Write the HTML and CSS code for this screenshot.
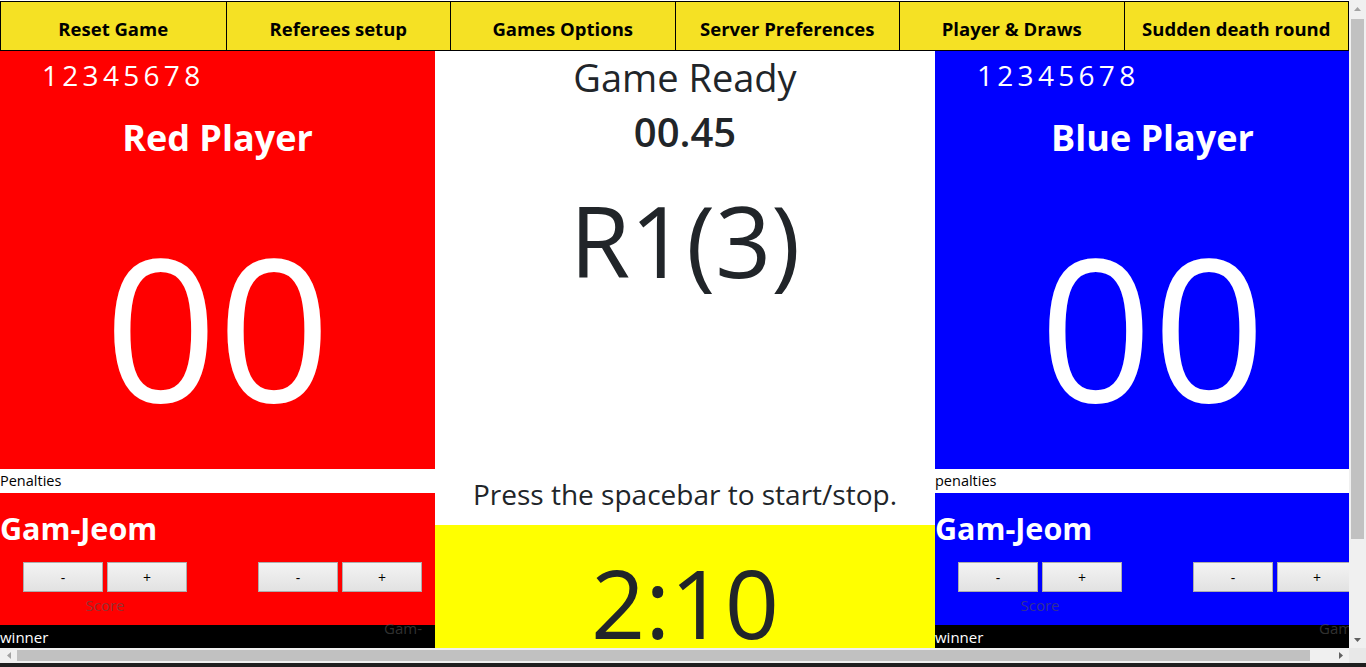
FILE: index.html
```html
<!DOCTYPE html>
<html lang="en">
<head>
<meta charset="utf-8">
<title>Scoreboard</title>
<link rel="stylesheet" href="styles.css">
</head>
<body>
<div class="page">
  <nav class="menu">
    <button class="menu-item">Reset Game</button>
    <button class="menu-item">Referees setup</button>
    <button class="menu-item">Games Options</button>
    <button class="menu-item">Server Preferences</button>
    <button class="menu-item">Player &amp; Draws</button>
    <button class="menu-item">Sudden death round</button>
  </nav>
  <main class="board">
    <section class="side side-red">
      <div class="player">
        <div class="rounds">12345678</div>
        <h1 class="player-name">Red Player</h1>
        <div class="player-score">00</div>
      </div>
      <div class="pen-label">Penalties</div>
      <div class="penalty">
        <h2 class="pen-title">Gam-Jeom</h2>
        <div class="pen-controls">
          <div class="ctl">
            <div class="ctl-buttons"><button class="btn">-</button><button class="btn">+</button></div>
            <div class="ctl-label">Score</div>
          </div>
          <div class="ctl">
            <div class="ctl-buttons"><button class="btn">-</button><button class="btn">+</button></div>
            <div class="ctl-label ctl-label-wrap">Gam-Jeom</div>
          </div>
        </div>
      </div>
      <div class="winner">winner</div>
    </section>
    <section class="center">
      <div class="status">
        <h2 class="state">Game Ready</h2>
        <div class="subtime">00.45</div>
        <div class="round">R1(3)</div>
        <p class="hint">Press the spacebar to start/stop.</p>
      </div>
      <div class="clock">2:10</div>
    </section>
    <section class="side side-blue">
      <div class="player">
        <div class="rounds">12345678</div>
        <h1 class="player-name">Blue Player</h1>
        <div class="player-score">00</div>
      </div>
      <div class="pen-label">penalties</div>
      <div class="penalty">
        <h2 class="pen-title">Gam-Jeom</h2>
        <div class="pen-controls">
          <div class="ctl">
            <div class="ctl-buttons"><button class="btn">-</button><button class="btn">+</button></div>
            <div class="ctl-label">Score</div>
          </div>
          <div class="ctl">
            <div class="ctl-buttons"><button class="btn">-</button><button class="btn">+</button></div>
            <div class="ctl-label ctl-label-wrap">Gam-Jeom</div>
          </div>
        </div>
      </div>
      <div class="winner">winner</div>
    </section>
  </main>
</div>

<div class="vscroll" aria-hidden="true">
  <div class="sb-btn">
    <svg width="7" height="4" viewBox="0 0 7 4"><path d="M0 4h7L3.5 0z" fill="#a3a3a3"/></svg>
  </div>
  <div class="v-track"><div class="v-thumb"></div></div>
  <div class="sb-btn">
    <svg width="7" height="4" viewBox="0 0 7 4"><path d="M0 0h7L3.5 4z" fill="#606060"/></svg>
  </div>
</div>
<div class="hscroll" aria-hidden="true">
  <div class="sb-btn">
    <svg width="4" height="7" viewBox="0 0 4 7"><path d="M4 0v7L0 3.5z" fill="#a3a3a3"/></svg>
  </div>
  <div class="h-track"><div class="h-thumb"></div></div>
  <div class="sb-btn">
    <svg width="4" height="7" viewBox="0 0 4 7"><path d="M0 0v7l4-3.5z" fill="#606060"/></svg>
  </div>
  <div class="sb-corner"></div>
</div>
<div class="frame-edge" aria-hidden="true"></div>
</body>
</html>
```
FILE: styles.css
```css
html, body {
  margin: 0;
  padding: 0;
}
body {
  width: 1366px;
  height: 667px;
  overflow: hidden;
  font-family: "Open Sans", "Noto Sans", sans-serif;
  color: #212529;
  background: #fff;
}
.page {
  width: 1370px;
  height: 767px;
}

/* top menu */
.menu {
  box-sizing: border-box;
  width: 1349px;
  height: 50px;
  margin-top: 1px;
  display: grid;
  grid-template-columns: repeat(6, 1fr);
  border: 1px solid #000;
  background: #f5e124;
}
.menu-item {
  border: 0;
  border-left: 1px solid #000;
  background: transparent;
  font-family: inherit;
  font-size: 18.5px;
  font-weight: 700;
  color: #000;
  padding: 5px 0 0;
  margin: 0;
  white-space: nowrap;
}
.menu-item:first-child {
  border-left: 0;
}

/* board */
.board {
  display: grid;
  grid-template-columns: 435px 500px 435px;
  height: 716px;
}
.side {
  display: block;
}
.side-red .player,
.side-red .penalty {
  background: #ff0000;
}
.side-blue .player,
.side-blue .penalty {
  background: #0000ff;
}
.player {
  box-sizing: border-box;
  height: 418px;
  padding-top: 9px;
  color: #fff;
}
.rounds {
  font-size: 28px;
  line-height: 30px;
  letter-spacing: 4.3px;
  padding-left: 42px;
}
.player-name {
  margin: 23px 0 0;
  font-size: 36px;
  line-height: 50px;
  font-weight: 700;
  text-align: center;
}
.player-score {
  margin-top: 57px;
  font-size: 198px;
  line-height: 210px;
  text-align: center;
}
.pen-label {
  height: 24px;
  font-size: 14.5px;
  line-height: 24px;
  color: #000;
  background: #fff;
}
.penalty {
  box-sizing: border-box;
  height: 132px;
  padding-top: 15px;
}
.pen-title {
  margin: 0;
  font-size: 30.5px;
  line-height: 40px;
  font-weight: 700;
  color: #fff;
}
.pen-controls {
  display: flex;
  gap: 71px;
  padding-left: 23px;
  margin-top: 14px;
}
.ctl {
  display: flex;
  flex-direction: column;
}
.ctl-buttons {
  display: flex;
  gap: 4px;
}
.btn {
  box-sizing: border-box;
  width: 80px;
  height: 30px;
  padding: 0;
  border: 1px solid #adadad;
  background: linear-gradient(#f3f3f3, #e2e2e2);
  font-family: "Open Sans", sans-serif;
  font-size: 14px;
  color: #000;
}
.ctl-label {
  margin-top: 2px;
  font-size: 15px;
  line-height: 22px;
  text-align: center;
  color: rgba(80, 80, 80, 0.62);
}
.ctl-label-wrap {
  margin-top: 24px;
  line-height: 24px;
  align-self: flex-end;
  width: 48px;
  text-align: right;
}
.winner {
  height: 24px;
  background: #000;
  color: #fff;
  font-size: 15px;
  line-height: 24px;
}

/* center column */
.center {
  display: flex;
  flex-direction: column;
}
.status {
  box-sizing: border-box;
  height: 474px;
  padding-top: 3px;
  display: flex;
  flex-direction: column;
  align-items: center;
}
.state {
  margin: 0;
  font-size: 38px;
  line-height: 46px;
  font-weight: 400;
}
.subtime {
  margin-top: 8px;
  font-size: 40px;
  line-height: 48px;
  font-weight: 600;
}
.round {
  margin-top: 24px;
  font-size: 98px;
  line-height: 120px;
}
.hint {
  margin: auto 0 13px;
  font-size: 28px;
  line-height: 36px;
}
.clock {
  flex: 1;
  background: #ffff00;
  padding-top: 17px;
  font-size: 95px;
  line-height: 120px;
  text-align: center;
}

/* window scrollbars (drawn over the page) */
.vscroll {
  position: fixed;
  top: 0;
  right: 0;
  width: 17px;
  height: 648px;
  display: flex;
  flex-direction: column;
  background: #f0f0f0;
}
.hscroll {
  position: fixed;
  left: 0;
  top: 648px;
  width: 1366px;
  height: 15px;
  display: flex;
  background: #f0f0f0;
}
.sb-btn {
  flex: 0 0 17px;
  display: flex;
  align-items: center;
  justify-content: center;
}
.v-track {
  flex: 1;
  padding: 2px 2px 0;
}
.v-thumb {
  height: 520px;
  background: #c1c1c1;
}
.h-track {
  flex: 1;
  padding: 2px 0;
}
.h-thumb {
  width: 1293px;
  height: 100%;
  background: #c1c1c1;
}
.sb-corner {
  flex: 0 0 17px;
  background: #e8e8e8;
}
.frame-edge {
  position: fixed;
  left: 0;
  top: 663px;
  width: 1366px;
  height: 4px;
  background: #1f1f1f;
}
```
